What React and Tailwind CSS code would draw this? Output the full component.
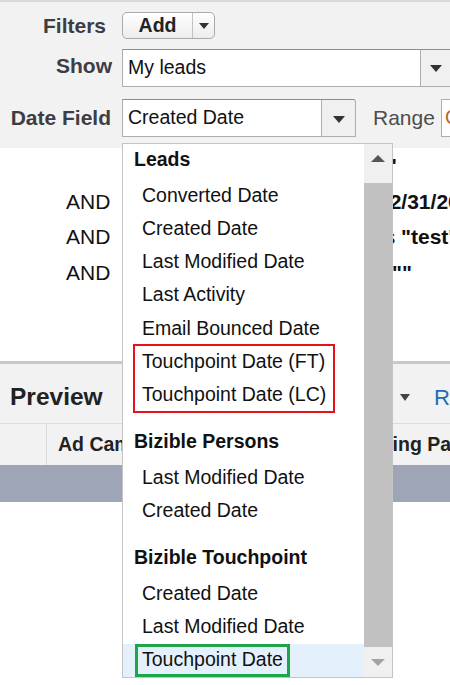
import React from "react";

const groups = [
  {
    title: "Leads",
    items: [
      "Converted Date",
      "Created Date",
      "Last Modified Date",
      "Last Activity",
      "Email Bounced Date",
      "Touchpoint Date (FT)",
      "Touchpoint Date (LC)",
    ],
  },
  { title: "Bizible Persons", items: ["Last Modified Date", "Created Date"] },
  { title: "Bizible Touchpoint", items: ["Created Date", "Last Modified Date", "Touchpoint Date"] },
];

function Down({ w = 12, h = 7, fill = "#333" }) {
  return (
    <svg width={w} height={h} viewBox={`0 0 ${w} ${h}`}>
      <polygon points={`0,0 ${w},0 ${w / 2},${h}`} fill={fill} />
    </svg>
  );
}

function Up({ w = 14, h = 7, fill = "#555" }) {
  return (
    <svg width={w} height={h} viewBox={`0 0 ${w} ${h}`}>
      <polygon points={`0,${h} ${w},${h} ${w / 2},0`} fill={fill} />
    </svg>
  );
}

function Item({ label, last }) {
  if (last) {
    return (
      <div className="flex h-[33.2px] bg-[#e4f1fc]">
        <span className="ml-[12px] flex items-center border-[3px] border-[#1ea44a] pl-[4px] pr-[4px]">{label}</span>
      </div>
    );
  }
  return <div className="flex h-[33.2px] items-center pl-[19px]">{label}</div>;
}

function DateList() {
  return (
    <div className="absolute left-[122px] top-[143px] flex h-[535px] w-[271px] border border-[#c4c4c4] bg-white text-[19.5px] text-[#111]">
      <div className="flex-1">
        {groups.map((g, gi) => (
          <div key={g.title} className={gi > 0 ? "mt-[14.9px]" : ""}>
            <div className="h-[34.9px] pl-[11px] font-bold leading-[30px]">{g.title}</div>
            {gi === 0 ? (
              <>
                {g.items.slice(0, 5).map((it) => (
                  <Item key={it} label={it} />
                ))}
                <div className="relative">
                  {g.items.slice(5).map((it) => (
                    <Item key={it} label={it} />
                  ))}
                  <div className="absolute left-[10px] top-[-1px] h-[69px] w-[202px] border-2 border-[#e5121c]" />
                </div>
              </>
            ) : (
              g.items.map((it, i) => (
                <Item key={it + i} label={it} last={gi === 2 && i === g.items.length - 1} />
              ))
            )}
          </div>
        ))}
      </div>
      <div className="flex w-[28px] flex-col bg-[#f0f0f0]">
        <div className="flex h-[39px] justify-center pt-[11px]">
          <Up />
        </div>
        <div className="flex-1 bg-[#c1c1c1]" />
        <div className="flex h-[30px] items-center justify-center">
          <Down w={14} h={7} fill="#a3a3a3" />
        </div>
      </div>
    </div>
  );
}

export default function App() {
  return (
    <div className="relative h-[685px] w-[450px] overflow-hidden bg-white font-['Liberation_Sans',Arial,sans-serif]">
      {/* filter form */}
      <div className="whitespace-nowrap border-t-2 border-[#dadada] bg-[#f2f2f2] pb-[11px] pt-[10px]">
        <div className="flex h-[27px] items-center">
          <span className="w-[112px] shrink-0 pr-[6px] text-right text-[21px] font-bold text-[#3d3d44]">Filters</span>
          <div className="ml-[10px] flex h-[27px] w-[93px] rounded-[5px] border border-[#a9a9a9] bg-linear-to-b from-white to-[#ececec]">
            <div className="flex w-[70px] items-center justify-center border-r border-[#c2c2c2] text-[19.5px] font-bold text-[#222]">
              Add
            </div>
            <div className="flex flex-1 items-center justify-center">
              <Down w={10} h={6} />
            </div>
          </div>
        </div>

        <div className="mt-[10px] flex h-[38px] items-center">
          <span className="w-[112px] shrink-0 pb-[4px] text-right text-[21px] font-bold text-[#3d3d44]">Show</span>
          <div className="ml-[10px] flex h-[38px] shrink-0">
            <div className="flex w-[299px] items-center border border-[#adadad] border-t-[#8c8c8c] bg-white pl-[5px] text-[19.5px] text-[#111]">
              My leads
            </div>
            <div className="flex w-[34px] items-center justify-center border border-l-0 border-[#adadad] border-t-[#8c8c8c] bg-[#f0f0f0] pr-[3px]">
              <Down />
            </div>
          </div>
        </div>

        <div className="mt-[12px] flex h-[38px] items-center">
          <span className="w-[112px] shrink-0 pr-[1px] text-right text-[21px] font-bold text-[#3d3d44]">Date Field</span>
          <div className="ml-[10px] flex h-[38px] shrink-0">
            <div className="flex w-[200px] items-center border border-[#adadad] border-t-[#8c8c8c] bg-white pl-[5px] text-[19.5px] text-[#111]">
              Created Date
            </div>
            <div className="flex w-[34px] items-center justify-center rounded-tr-[3px] border border-l-0 border-[#adadad] border-t-[#8c8c8c] bg-[#f0f0f0] pt-[2px]">
              <Down />
            </div>
          </div>
          <span className="ml-[17px] shrink-0 text-[21px] text-[#4d4d4d]">Range</span>
          <div className="ml-[6px] flex h-[38px] w-[60px] shrink-0 items-center border border-[#adadad] bg-white pl-[3px] text-[19.5px] text-[#b8641f]">
            Custom
          </div>
        </div>
      </div>

      {/* criteria lines behind the menu */}
      <div className="whitespace-nowrap text-[21px] text-[#111]">
        <div className="flex h-[35.5px] items-center">
          <span className="w-[387px] shrink-0" />
          <span className="font-bold">"</span>
        </div>
        <div className="flex h-[35.5px] items-center">
          <span className="w-[378px] shrink-0 pl-[66px]">AND</span>
          <span className="font-bold">12/31/2019</span>
        </div>
        <div className="flex h-[35.5px] items-center">
          <span className="w-[317px] shrink-0 pl-[66px]">AND</span>
          <span>
            contains <b>"test"</b>
          </span>
        </div>
        <div className="flex h-[35.5px] items-center">
          <span className="w-[392px] shrink-0 pl-[66px]">AND</span>
          <span className="font-bold">""</span>
        </div>
      </div>

      {/* preview panel */}
      <div className="mt-[71px] border-t-[3px] border-[#c9c9c9] bg-[#f2f2f2]">
        <div className="flex h-[59px] items-center justify-between pl-[10px] pt-[7px]">
          <span className="text-[24.5px] font-bold text-[#222]">Preview</span>
          <div className="flex items-center">
            <Down w={10} h={7} fill="#444" />
            <span className="ml-[24px] w-[16px] overflow-hidden text-[22px] text-[#1a6fb8]">R</span>
          </div>
        </div>
        <div className="flex h-[42px] whitespace-nowrap border-t border-[#dcdcdc] text-[19.5px] font-bold text-[#222]">
          <div className="w-[47px] shrink-0 border-r border-[#d9d9d9]" />
          <div className="flex w-[290px] shrink-0 items-center overflow-hidden border-r border-[#d9d9d9] pl-[11px]">
            Ad Campaign
          </div>
          <div className="flex items-center pl-[9px]">Landing Page</div>
        </div>
        <div className="h-[37px] bg-[#9ea5b6]" />
      </div>

      <DateList />
    </div>
  );
}
